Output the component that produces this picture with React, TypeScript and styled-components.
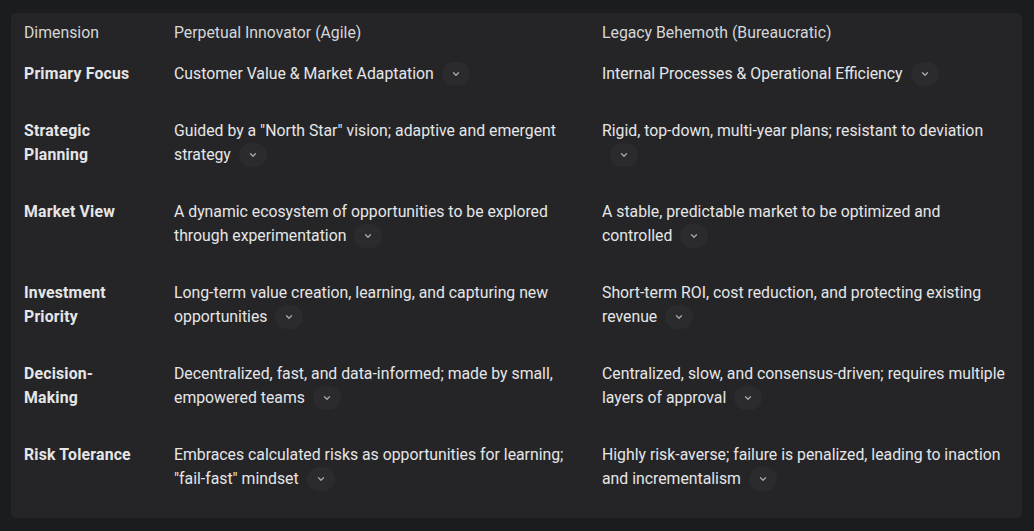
import React from 'react';
import styled, { createGlobalStyle } from 'styled-components';

const GlobalStyle = createGlobalStyle`
  html, body {
    margin: 0;
    padding: 0;
    background-color: #1b1c1e;
  }
  body {
    font-family: Roboto, 'Noto Sans', sans-serif;
  }
`;

const Page = styled.div`
  padding: 13px 12px 13px 11px;
  width: 1034px;
  height: 531px;
  box-sizing: border-box;
`;

const Card = styled.div`
  background-color: #252527;
  border-radius: 5px;
  height: 505px;
  box-sizing: border-box;
  padding: 8px 10px 0 13px;
`;

const Grid = styled.div`
  display: grid;
  grid-template-columns: 150px 428px 1fr;
`;

const Cell = styled.div<{ $header?: boolean; $label?: boolean; $last?: boolean; $pad?: number }>`
  font-size: 15.8px;
  line-height: 24px;
  color: ${p => (p.$header ? '#d6d6d8' : '#e6e6e8')};
  font-weight: ${p => (p.$label ? 700 : 400)};
  letter-spacing: ${p => (p.$label ? '0.2px' : '0')};
  padding-right: ${p => p.$pad ?? 18}px;
  padding-bottom: ${p => (p.$header ? '17px' : p.$last ? '0' : '33px')};
`;

const Chip = styled.span`
  display: inline-flex;
  align-items: center;
  justify-content: center;
  width: 28px;
  height: 24px;
  margin-left: 8px;
  border-radius: 12px;
  background-color: #2b2b2e;
  vertical-align: middle;
  margin-top: -2px;
`;

const Chevron = () => (
  <svg width="10" height="10" viewBox="0 0 10 10">
    <path d="M2.5 3.8 L5 6.2 L7.5 3.8" fill="none" stroke="#a8a8ac" strokeWidth="1.3" strokeLinecap="round" strokeLinejoin="round" />
  </svg>
);

const rows = [
  {
    dim: 'Primary Focus',
    agile: 'Customer Value & Market Adaptation',
    legacy: 'Internal Processes & Operational Efficiency',
  },
  {
    dim: 'Strategic Planning',
    agile: 'Guided by a "North Star" vision; adaptive and emergent strategy',
    legacy: 'Rigid, top-down, multi-year plans; resistant to deviation',
  },
  {
    dim: 'Market View',
    agile: 'A dynamic ecosystem of opportunities to be explored through experimentation',
    legacy: 'A stable, predictable market to be optimized and controlled',
  },
  {
    dim: 'Investment Priority',
    agile: 'Long-term value creation, learning, and capturing new opportunities',
    legacy: 'Short-term ROI, cost reduction, and protecting existing revenue',
  },
  {
    dim: 'Decision-Making',
    agile: 'Decentralized, fast, and data-informed; made by small, empowered teams',
    legacy: 'Centralized, slow, and consensus-driven; requires multiple layers of approval',
  },
  {
    dim: 'Risk Tolerance',
    agile: 'Embraces calculated risks as opportunities for learning; "fail-fast" mindset',
    legacy: 'Highly risk-averse; failure is penalized, leading to inaction and incrementalism',
  },
];

const App: React.FC = () => {
  return (
    <Page>
      <GlobalStyle />
      <Card>
        <Grid>
          <Cell $header $pad={28}>Dimension</Cell>
          <Cell $header>Perpetual Innovator (Agile)</Cell>
          <Cell $header $pad={0}>Legacy Behemoth (Bureaucratic)</Cell>
          {rows.map((row, i) => {
            const last = i === rows.length - 1;
            return (
              <React.Fragment key={row.dim}>
                <Cell $label $last={last} $pad={28}>{row.dim}</Cell>
                <Cell $last={last}>
                  {row.agile}
                  <Chip><Chevron /></Chip>
                </Cell>
                <Cell $last={last} $pad={0}>
                  {row.legacy}
                  <Chip><Chevron /></Chip>
                </Cell>
              </React.Fragment>
            );
          })}
        </Grid>
      </Card>
    </Page>
  );
};

export default App;
